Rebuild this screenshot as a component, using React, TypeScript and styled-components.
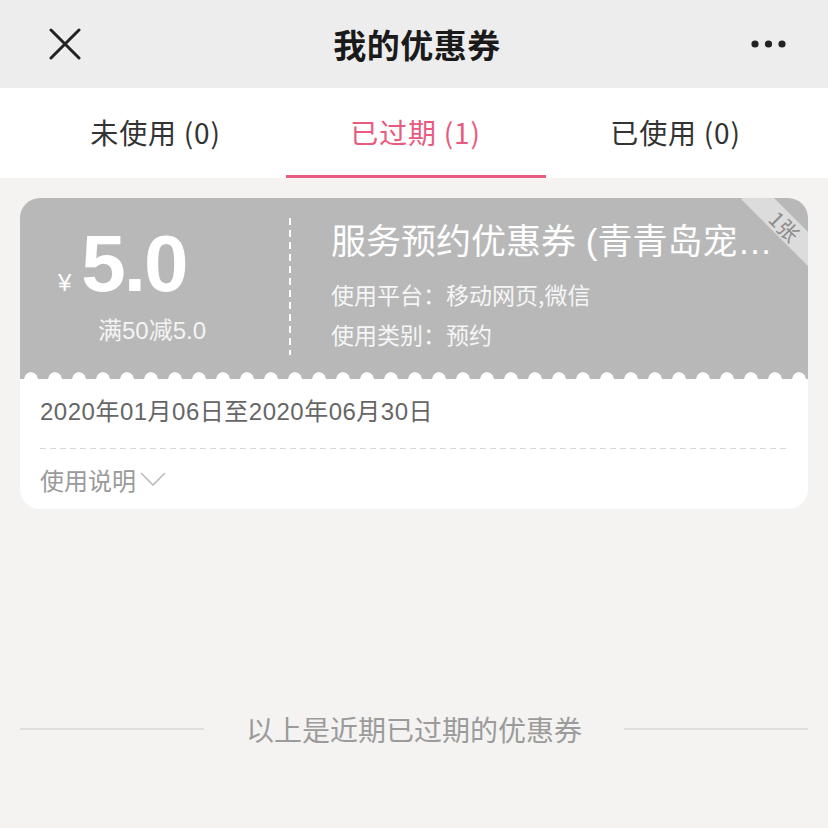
import React from "react";
import styled, { createGlobalStyle } from "styled-components";

const Global = createGlobalStyle`
  html, body { margin: 0; padding: 0; background: #f4f3f2; }
  body { font-family: "Liberation Sans", "Noto Sans CJK SC", sans-serif; }
  * { box-sizing: border-box; }
`;

const Page = styled.div`
  width: 828px;
  min-height: 828px;
  background: #f4f3f2;
  display: flex;
  flex-direction: column;
`;

const Header = styled.header`
  height: 88px;
  background: #ededed;
  display: flex;
  align-items: center;
  justify-content: space-between;
  padding: 0 38px 0 44px;
`;

const IconButton = styled.div`
  width: 42px;
  height: 42px;
  display: flex;
  align-items: center;
  justify-content: center;
`;

const Title = styled.h1`
  margin: 0;
  font-family: "Noto Sans CJK SC", sans-serif;
  font-size: 33px;
  font-weight: 600;
  color: #1a1a1a;
  letter-spacing: 0.5px;
`;

const Tabs = styled.nav`
  height: 90px;
  background: #fff;
  display: grid;
  grid-template-columns: repeat(3, 260px);
  justify-content: center;
  padding-left: 3px;
`;

const Tab = styled.div<{ $active?: boolean }>`
  position: relative;
  display: flex;
  align-items: center;
  justify-content: center;
  padding-bottom: 3px;
  font-family: "Noto Sans CJK SC", sans-serif;
  font-size: 28px;
  letter-spacing: 0.8px;
  color: ${(p) => (p.$active ? "#ea5a7e" : "#333")};
  &::after {
    content: "";
    position: absolute;
    left: 0;
    right: 0;
    bottom: 0;
    height: 3px;
    background: ${(p) => (p.$active ? "#ea5a7e" : "transparent")};
  }
`;

const Card = styled.section`
  margin: 20px 20px 0;
  background: #fff;
  border-radius: 20px;
  overflow: hidden;
`;

const CardTop = styled.div`
  position: relative;
  height: 181px;
  background: #b8b8b8;
  display: flex;
  overflow: hidden;
  &::after {
    content: "";
    position: absolute;
    left: 0;
    right: 0;
    bottom: 0;
    height: 7px;
    background: radial-gradient(circle at 12px 7px, #fff 6.4px, transparent 7px) -1px 0 / 24px 7px repeat-x;
  }
`;

const AmountCol = styled.div`
  width: 269px;
  flex: none;
  display: flex;
  flex-direction: column;
  padding: 26px 0 0 38px;
  color: #fff;
`;

const AmountRow = styled.div`
  display: flex;
  align-items: baseline;
  height: 82px;
`;

const Yen = styled.span`
  font-family: "Liberation Sans", sans-serif;
  font-size: 24px;
  margin-right: 10px;
`;

const Amount = styled.span`
  font-family: "Liberation Sans", sans-serif;
  font-weight: 700;
  font-size: 80px;
  line-height: 80px;
  letter-spacing: -2px;
`;

const Condition = styled.div`
  margin: 10px 0 0 40px;
  font-size: 24px;
  line-height: 30px;
  color: #f4f4f4;
`;

const Divider = styled.div`
  flex: none;
  width: 2px;
  margin: 20px 0 24px;
  background: repeating-linear-gradient(to bottom, #fff 0 7px, transparent 7px 12px);
`;

const InfoCol = styled.div`
  flex: 1;
  min-width: 0;
  padding: 20px 22px 0 40px;
  color: #fff;
`;

const CouponName = styled.div`
  font-family: "Liberation Sans", "Noto Sans CJK SC", sans-serif;
  font-size: 35px;
  line-height: 48px;
  margin-bottom: 8px;
  white-space: nowrap;
  overflow: hidden;
  text-overflow: ellipsis;
`;

const InfoLine = styled.div`
  font-family: "Noto Sans CJK SC", sans-serif;
  font-size: 23px;
  line-height: 40px;
  color: #f6f6f6;
`;

const Ribbon = styled.div`
  position: absolute;
  left: 715px;
  top: 16px;
  width: 100px;
  height: 24px;
  transform: rotate(45deg);
  background: #dcdcdc;
  color: #8c8c8c;
  font-family: "Noto Sans CJK SC", sans-serif;
  font-size: 21px;
  line-height: 24px;
  text-align: center;
`;

const CardBottom = styled.div`
  padding: 8px 20px 0;
`;

const DateText = styled.div`
  font-size: 24px;
  letter-spacing: 0.5px;
  line-height: 50px;
  color: #666;
`;

const DashLine = styled.div`
  height: 1px;
  margin-top: 11px;
  background: repeating-linear-gradient(to right, #d8d8d8 0 6px, transparent 6px 10px);
`;

const Guide = styled.div`
  display: flex;
  align-items: center;
  height: 60px;
  font-family: "Noto Sans CJK SC", sans-serif;
  font-size: 24px;
  color: #9a9a9a;
  gap: 4px;
`;

const EndNote = styled.div`
  margin-top: 200px;
  padding: 0 20px;
  display: flex;
  align-items: center;
  gap: 42px;
  &::before, &::after {
    content: "";
    flex: 1;
    height: 2px;
    background: #dedede;
  }
`;

const EndText = styled.span`
  font-family: "Noto Sans CJK SC", sans-serif;
  font-size: 28px;
  line-height: 40px;
  color: #9b9b9b;
`;

export default function App() {
  return (
    <Page>
      <Global />
      <Header>
        <IconButton>
          <svg width="32" height="32" viewBox="0 0 32 32">
            <path d="M2 2 L30 30 M30 2 L2 30" stroke="#222" strokeWidth="3" strokeLinecap="round" fill="none" />
          </svg>
        </IconButton>
        <Title>我的优惠券</Title>
        <IconButton>
          <svg width="36" height="10" viewBox="0 0 36 10">
            <circle cx="4" cy="5" r="3.6" fill="#222" />
            <circle cx="17.5" cy="5" r="3.6" fill="#222" />
            <circle cx="31" cy="5" r="3.6" fill="#222" />
          </svg>
        </IconButton>
      </Header>
      <Tabs>
        <Tab>未使用 (0)</Tab>
        <Tab $active>已过期 (1)</Tab>
        <Tab>已使用 (0)</Tab>
      </Tabs>
      <Card>
        <CardTop>
          <AmountCol>
            <AmountRow>
              <Yen>¥</Yen>
              <Amount>5.0</Amount>
            </AmountRow>
            <Condition>满50减5.0</Condition>
          </AmountCol>
          <Divider />
          <InfoCol>
            <CouponName>服务预约优惠券 (青青岛宠物医院)</CouponName>
            <InfoLine>使用平台：移动网页,微信</InfoLine>
            <InfoLine>使用类别：预约</InfoLine>
          </InfoCol>
          <Ribbon>1张</Ribbon>
        </CardTop>
        <CardBottom>
          <DateText>2020年01月06日至2020年06月30日</DateText>
          <DashLine />
          <Guide>
            使用说明
            <svg width="26" height="16" viewBox="0 0 26 16">
              <path d="M1 2 L13 14 L25 2" stroke="#bdbdbd" strokeWidth="1.6" fill="none" />
            </svg>
          </Guide>
        </CardBottom>
      </Card>
      <EndNote>
        <EndText>以上是近期已过期的优惠券</EndText>
      </EndNote>
    </Page>
  );
}
